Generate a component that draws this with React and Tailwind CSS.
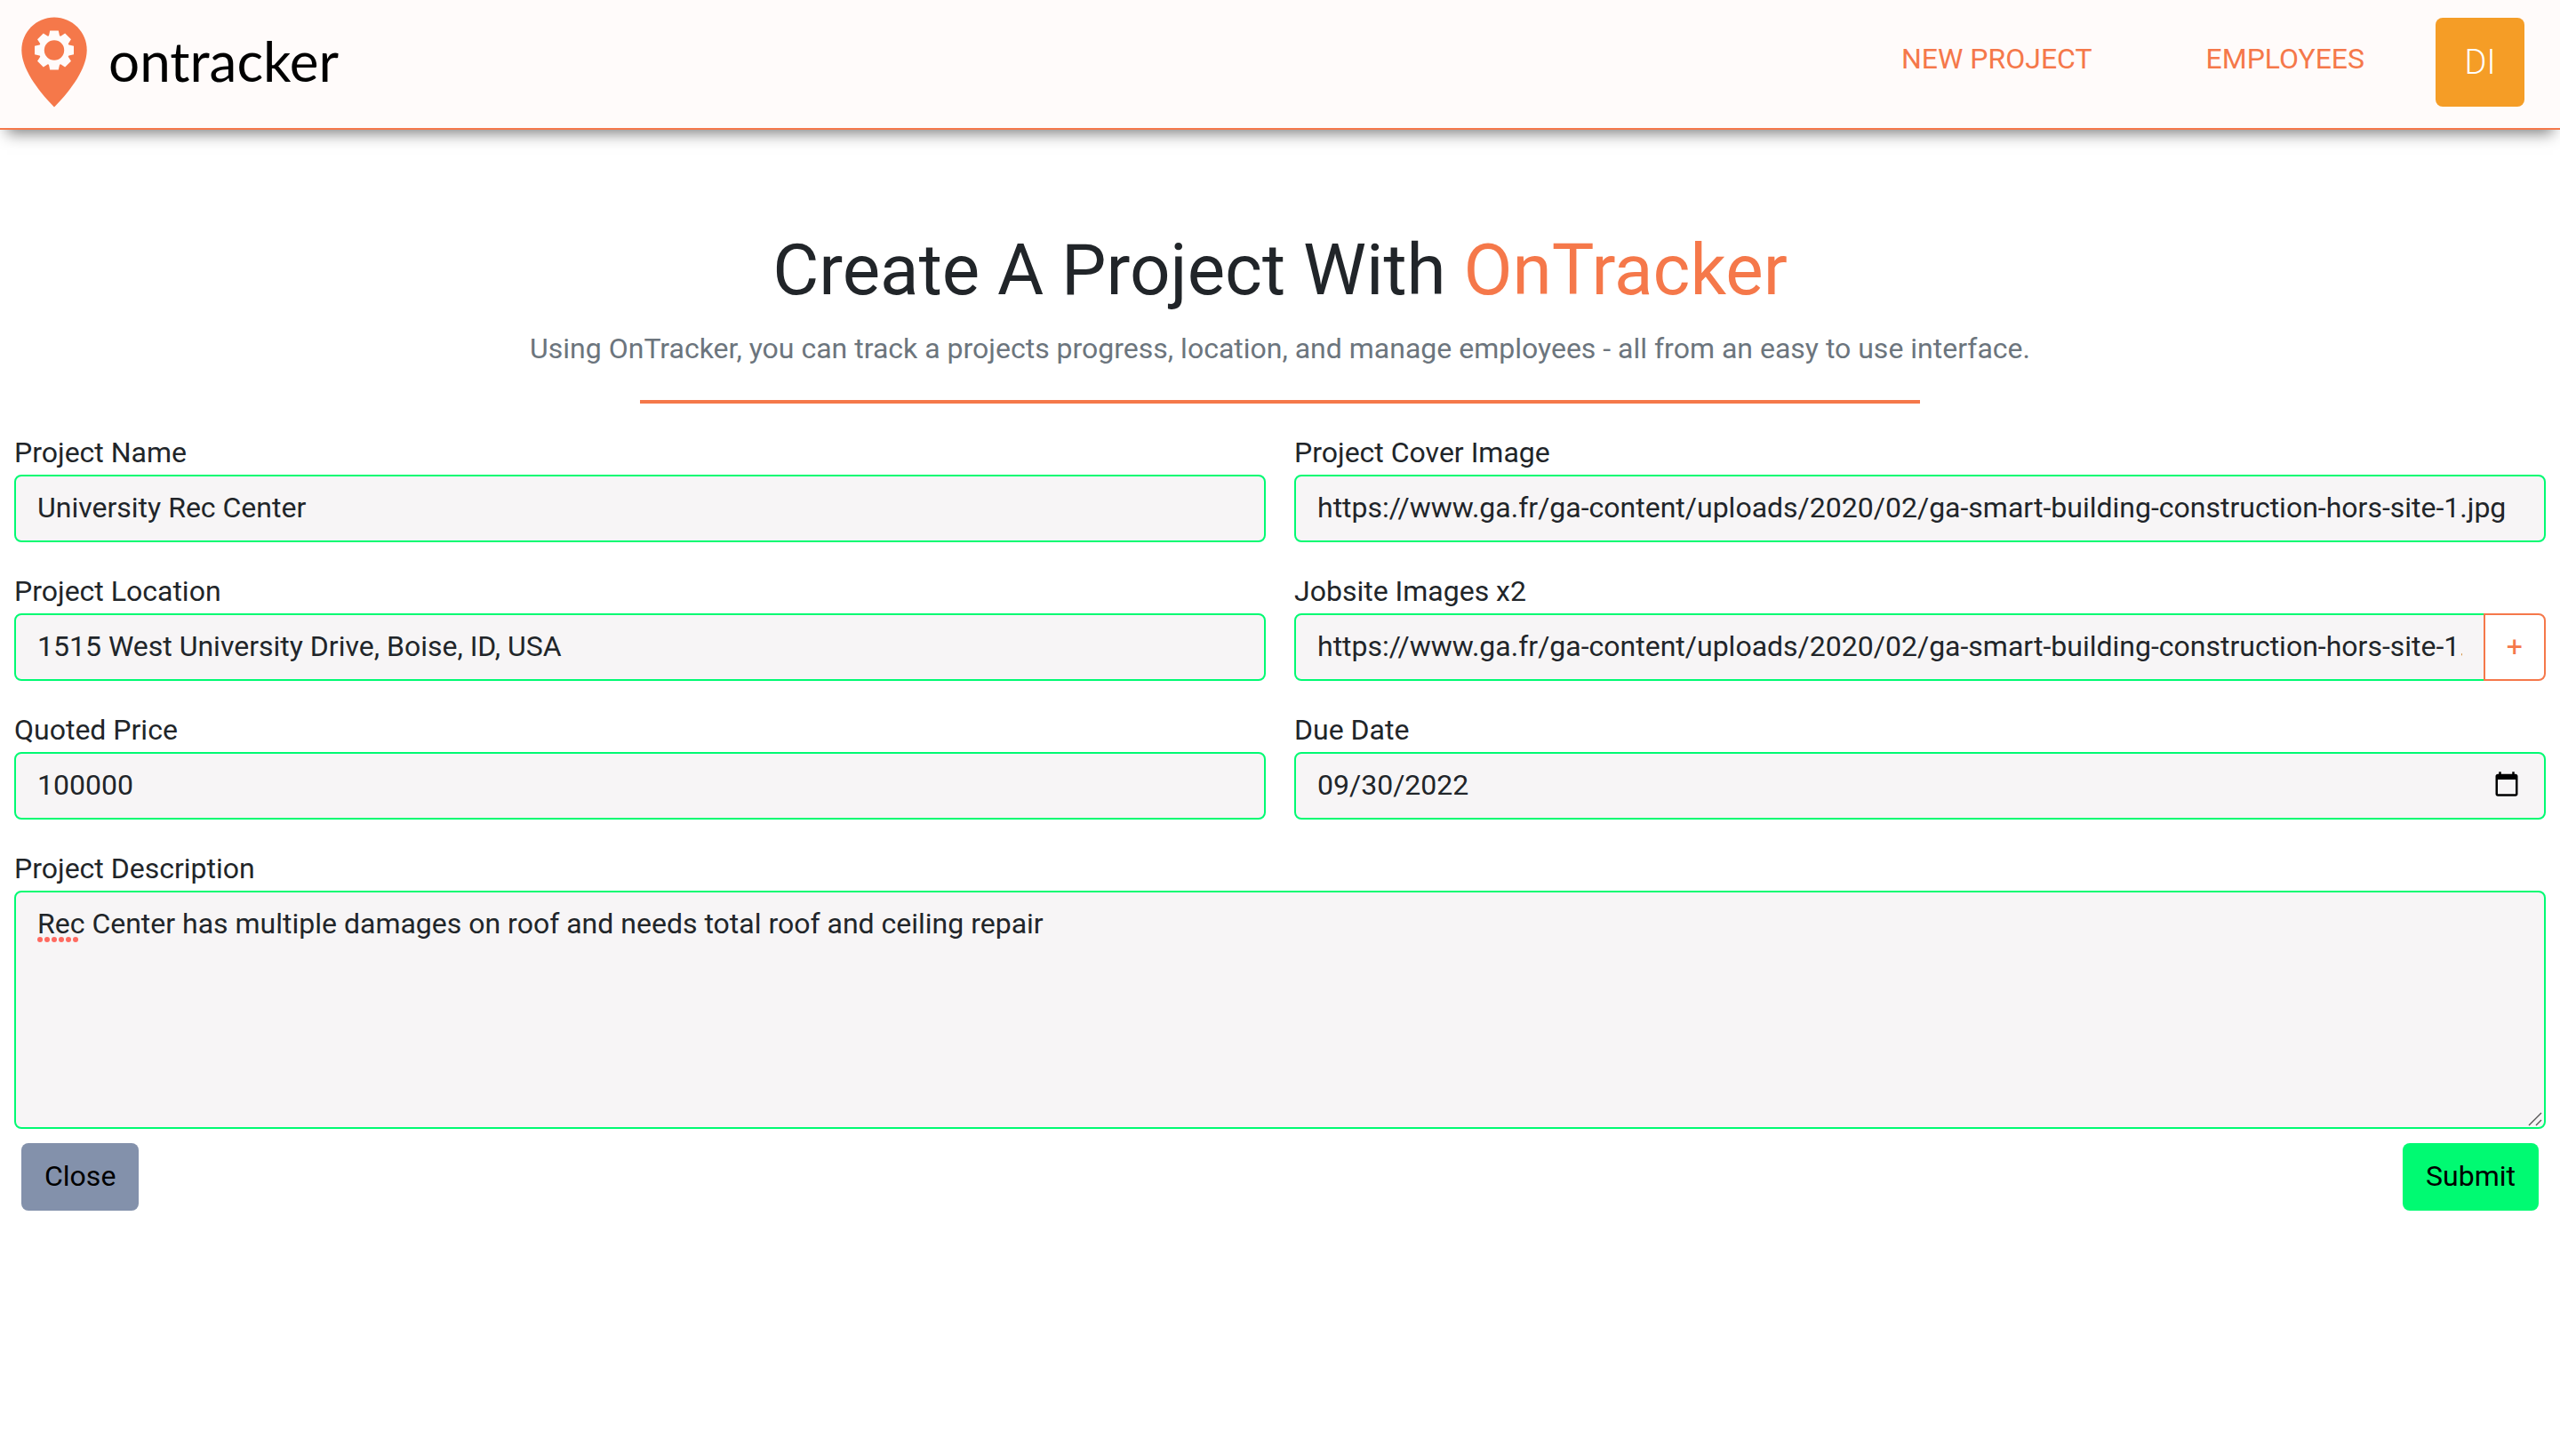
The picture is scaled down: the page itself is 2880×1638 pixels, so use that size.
import React from "react";

const TEETH = [0, 45, 90, 135, 180, 225, 270, 315];

const FIELD =
  "block w-full min-w-0 rounded-lg border-2 border-[#00fa72] bg-[#f7f5f6] px-6 pt-[11px] pb-[13px] text-[32px] leading-[48px] text-[#212529] outline-none";

const LABEL = "block pb-0.5 leading-[46px]";

function LogoMark() {
  return (
    <svg viewBox="0 0 74 102" className="h-[102px] w-[74px] shrink-0" aria-hidden="true">
      <path
        d="M37 .5C16.8 .5 .3 17 .3 37.2C.3 58 18 82 37 101.5C56 82 73.7 58 73.7 37.2C73.7 17 57.2 .5 37 .5Z"
        fill="#f5784a"
      />
      <g fill="#fffbfa">
        <circle cx="37" cy="37.5" r="17.3" />
        {TEETH.map((angle) => (
          <path
            key={angle}
            d="M30.6 23L32.2 15.5H41.8L43.4 23Z"
            transform={`rotate(${angle} 37 37.5)`}
          />
        ))}
      </g>
      <circle cx="37" cy="37.5" r="11.2" fill="#f5784a" />
    </svg>
  );
}

function Field({ id, label, children }) {
  return (
    <div>
      <label htmlFor={id} className={LABEL}>
        {label}
      </label>
      {children}
    </div>
  );
}

export default function App() {
  return (
    <div className="bg-white font-['Roboto',sans-serif] text-[32px] leading-[48px] text-[#212529]">
      <header className="flex items-center justify-between border-b-2 border-[#f5784a] bg-[#fffbfa] pt-5 pr-10 pb-6 pl-6 shadow-[0_12px_16px_-8px_rgba(0,0,0,0.5)]">
        <a href="#home" className="-my-px flex items-center gap-6 text-black">
          <LogoMark />
          <span className="pb-1 font-['Lato',sans-serif] text-[62px] leading-[64px]">ontracker</span>
        </a>
        <nav className="flex items-center text-[#f5784a]">
          <a href="#new-project" className="mr-32 pb-2">
            NEW PROJECT
          </a>
          <a href="#employees" className="mr-20 pb-2">
            EMPLOYEES
          </a>
          <button
            type="button"
            className="flex size-[100px] items-center justify-center rounded-lg bg-[#f59d26] text-[38px] font-light text-white"
          >
            DI
          </button>
        </nav>
      </header>

      <main className="px-4 pt-[110px]">
        <div className="text-center">
          <h1 className="mb-4 text-[80px] leading-[96px]">
            Create A Project With <span className="text-[#f5784a]">OnTracker</span>
          </h1>
          <p className="mb-[34px] text-[#6c757d]">
            Using OnTracker, you can track a projects progress, location, and manage employees - all
            from an easy to use interface.
          </p>
        </div>
        <hr className="mx-auto mb-8 h-1 w-[1440px] max-w-full border-0 bg-[#f5784a]" />

        <form onSubmit={(event) => event.preventDefault()}>
          <div className="grid grid-cols-2 gap-8">
            <Field id="name" label="Project Name">
              <input id="name" type="text" className={FIELD} defaultValue="University Rec Center" />
            </Field>
            <Field id="cover" label="Project Cover Image">
              <input
                id="cover"
                type="text"
                className={FIELD}
                defaultValue="https://www.ga.fr/ga-content/uploads/2020/02/ga-smart-building-construction-hors-site-1.jpg"
              />
            </Field>
            <Field id="location" label="Project Location">
              <input
                id="location"
                type="text"
                className={FIELD}
                defaultValue="1515 West University Drive, Boise, ID, USA"
              />
            </Field>
            <Field id="jobsite" label="Jobsite Images x2">
              <div className="flex">
                <input
                  id="jobsite"
                  type="text"
                  className={`${FIELD} rounded-r-none`}
                  defaultValue="https://www.ga.fr/ga-content/uploads/2020/02/ga-smart-building-construction-hors-site-1.jpg"
                />
                <button
                  type="button"
                  className="-ml-0.5 rounded-r-lg border-2 border-[#f5784a] bg-white px-6 pb-0.5 text-[#f5784a]"
                >
                  +
                </button>
              </div>
            </Field>
            <Field id="price" label="Quoted Price">
              <input id="price" type="text" className={FIELD} defaultValue="100000" />
            </Field>
            <Field id="due" label="Due Date">
              <input
                id="due"
                type="date"
                className={`${FIELD} h-[76px] [&::-webkit-datetime-edit-day-field]:p-0 [&::-webkit-datetime-edit-month-field]:p-0 [&::-webkit-datetime-edit-year-field]:p-0`}
                defaultValue="2022-09-30"
              />
            </Field>
            <div className="col-span-2">
              <label htmlFor="description" className={LABEL}>
                Project Description
              </label>
              <div className="relative">
                <textarea
                  id="description"
                  rows={5}
                  className={`${FIELD} resize-none`}
                  defaultValue="Rec Center has multiple damages on roof and needs total roof and ceiling repair"
                />
                <svg
                  viewBox="0 0 46 6"
                  className="pointer-events-none absolute top-[52px] left-[26px] h-[6px] w-[46px]"
                  fill="#ff6a60"
                  aria-hidden="true"
                >
                  {[3, 11, 19, 27, 35, 43].map((x) => (
                    <circle key={x} cx={x} cy="3" r="3" />
                  ))}
                </svg>
                <svg
                  viewBox="0 0 16 16"
                  className="pointer-events-none absolute right-1 bottom-[3px] size-4"
                  stroke="#555"
                  strokeWidth="1.4"
                  fill="none"
                  aria-hidden="true"
                >
                  <path d="M1 15L15 1M9 15L15 9" />
                </svg>
              </div>
            </div>
          </div>
          <div className="flex justify-between px-2 py-4 text-black">
            <button type="button" className="rounded-lg bg-[#8391ab] px-[26px] pt-[13px] pb-[15px]">
              Close
            </button>
            <button type="submit" className="rounded-lg bg-[#00fa72] px-[26px] pt-[13px] pb-[15px]">
              Submit
            </button>
          </div>
        </form>
      </main>
    </div>
  );
}
